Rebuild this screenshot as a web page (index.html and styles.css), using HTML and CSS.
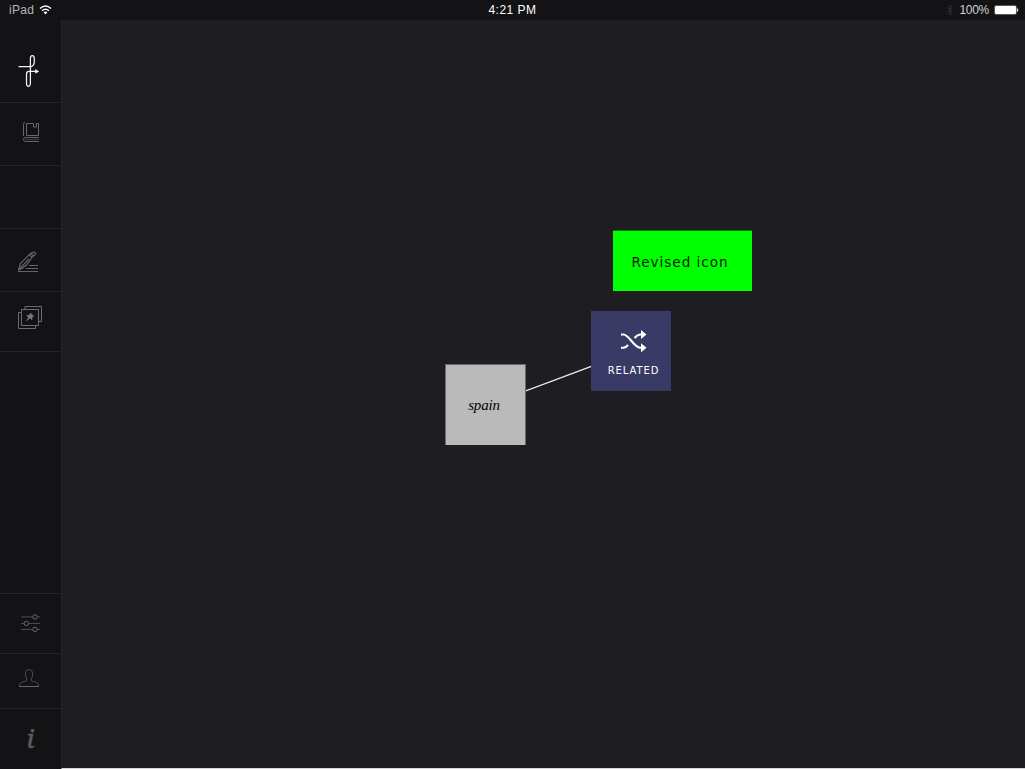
FILE: index.html
```html
<!DOCTYPE html>
<html lang="en">
<head>
<meta charset="utf-8">
<title>Canvas</title>
<link rel="stylesheet" href="styles.css">
</head>
<body>
<div class="app">
  <header class="status">
    <div class="status-left">
      <span class="device">iPad</span>
      <svg class="wifi" width="13" height="10" viewBox="0 0 13 10"><g fill="none" stroke="#fff" stroke-width="1.4"><path d="M1 3.6Q6.5-1.4 12 3.6"/><path d="M3 5.8Q6.5 2.6 10 5.8"/></g><path d="M4.6 7.3Q6.5 5.7 8.4 7.3L6.5 9.4Z" fill="#fff"/></svg>
    </div>
    <div class="clock">4:21 PM</div>
    <div class="status-right">
      <svg width="8" height="12" viewBox="0 0 8 12" fill="none" stroke="#303034"><path d="M1 3.2L6.5 8.5L4 11V1L6.5 3.5L1 8.8"/></svg>
      <span class="percent">100%</span>
      <svg class="battery" width="25" height="10" viewBox="0 0 25 10"><rect x=".5" y=".5" width="22" height="9" rx="1.5" fill="none" stroke="#55555a"/><rect x="1" y="1" width="21" height="8" rx="1" fill="#fff"/><path d="M23.3 3.5Q24.8 5 23.3 6.5Z" fill="#fff" stroke="#fff" stroke-width=".6"/></svg>
    </div>
  </header>
  <div class="main">
    <nav class="sidebar">
      <a class="item logo"><svg width="61" height="82" viewBox="0 20 61 82" stroke="#f4f4f6" stroke-width="1.25"><path d="M18.5 66.5H31.5Q34.3 65.5 34.3 61.5V58.5Q34.3 55.5 32.3 55.5Q30.4 55.5 30.4 58.5V82.5Q30.4 86.3 28.5 86.3Q26.5 86.3 26.5 83.5V74Q26.5 71.4 29 71.4H36"/><path d="M35.5 69.6L38.7 71.4L35.5 73.2Z" fill="#f4f4f6" stroke-width=".6"/></svg></a>
      <a class="item book"><svg width="61" height="62" viewBox="0 103 61 62" stroke="#66666e"><path d="M33.5 123.5H26.5V135.5H38.5V123.5H36.5V127H33.5V123.5M25 122.5Q23.5 122.5 23.5 124.5V136M39 137.5H25.5Q23.5 137.5 23.5 139.5Q23.5 141.5 25.5 141.5H39"/><path d="M25 139.5H39" stroke="#3c3c42"/></svg></a>
      <div class="item blank"></div>
      <a class="item pen"><svg width="61" height="62" viewBox="0 229 61 62" stroke="#64646c"><path d="M18 271.5H38M26 268.5H38M29 265.5H38"/><path d="M18.5 270L20.3 263.5L30.5 253.5L33.5 255.5L26.5 265L22 268.5ZM31 253.2L34 252L35.8 253.5L34 256.3M29.3 255L32 257M19 269.5L29 259" stroke-width="1.15"/></svg></a>
      <a class="item cards"><svg width="61" height="59" viewBox="0 292 61 59" stroke="#6c6c74"><path d="M21.5 309.5H38.5V325.5H21.5ZM25 309V306.5H41.5V321.5H39M21 312.5H18.5V328.5H35.5V326"/><path d="M30.5 313L33.8 316.2L32.2 317L32 319.8L30 318.2L26 321L28.4 317.4L26.5 315.5L29.6 315Z" fill="#777780" stroke="#777780" stroke-width=".4"/></svg></a>
      <div class="spacer"></div>
      <a class="item sliders"><svg width="61" height="59" viewBox="0 594 61 59" stroke="#515156"><path d="M21 616.9H32.5M37.5 616.9H40M21 623.4H24M28.5 623.4H40M21 629.4H32.5M37.5 629.4H40"/><g stroke="#68686d"><circle cx="35" cy="616.9" r="2.2"/><circle cx="26.3" cy="623.4" r="2.2"/><circle cx="35" cy="629.4" r="2.2"/></g></svg></a>
      <a class="item person"><svg width="61" height="54" viewBox="0 654 61 54" stroke="#4c4c50"><path d="M19.5 686V685Q20 682.7 22.5 682L25.5 681.2Q27.3 680.5 26.8 679L25.5 676V672.5Q25.8 669.5 29 669.5Q32.2 669.5 32.5 672.5V676L31.2 679Q30.7 680.5 32.5 681.2L35.5 682Q38 682.7 38.5 685V686"/><path d="M19 686.5H39" stroke="#69696d"/></svg></a>
      <a class="item info">i</a>
    </nav>
    <main class="canvas">
      <svg class="link" width="68" height="28" viewBox="0 0 68 28"><path d="M0 26.2L67 1.2" stroke="#eee" stroke-width="1.3"/></svg>
      <div class="node note"><span>Revised icon</span></div>
      <div class="node related">
        <svg width="28" height="24" viewBox="0 0 28 24"><path d="M1 4.5H3.5C9 4.5 14 17.8 20.5 17.8H23M1 17.8H3.5Q6 17.5 8 15M14.5 8Q17 4.8 20 4.5H23" fill="none" stroke="#fff" stroke-width="2.1"/><path d="M21 0L26.5 4.5L21 9ZM21 13.3L26.5 17.8L21 22.3Z" fill="#fff"/></svg>
        <span>RELATED</span>
      </div>
      <div class="node spain"><span>spain</span></div>
    </main>
  </div>
</div>
</body>
</html>
```
FILE: styles.css
```css
* { box-sizing: border-box; }
body { margin: 0; background: #1e1d21; }
.app { width: 1025px; height: 769px; display: flex; flex-direction: column; overflow: hidden; }
svg { display: block; flex: none; }

.status {
  height: 20px;
  flex: none;
  display: grid;
  grid-template-columns: 1fr auto 1fr;
  align-items: center;
  background: #131315;
  color: #fff;
  font: 12px/20px "Liberation Sans", Arial, sans-serif;
}
.status-left { display: flex; align-items: center; padding-left: 9px; gap: 5px; }
.device { color: #b4b4b6; letter-spacing: .3px; }
.wifi { margin-top: -1px; }
.clock { letter-spacing: .5px; }
.status-right { display: flex; align-items: center; justify-content: flex-end; padding-right: 6px; }
.percent { margin-left: 6px; color: #d0d0d2; letter-spacing: -.3px; }
.battery { margin-left: 5px; }

.main { flex: 1; display: flex; min-height: 0; }
.sidebar {
  width: 61px;
  flex: none;
  display: flex;
  flex-direction: column;
  background: #131315;
}
.item { flex: none; border-bottom: 1px solid #242427; }
.item svg { fill: none; }
.logo { height: 83px; }
.book, .blank, .pen { height: 63px; }
.cards { height: 60px; }
.spacer { flex: 1; border-bottom: 1px solid #242427; }
.sliders { height: 60px; }
.person { height: 55px; }
.info {
  height: 60px;
  border: 0;
  text-align: center;
  color: #5a5a63;
  -webkit-text-stroke: .5px #5a5a63;
  font: italic 26px/58px "Noto Serif", "DejaVu Serif", serif;
}

.canvas {
  flex: 1;
  position: relative;
  background: #1e1d21;
  border-left: 1px solid #252528;
  border-bottom: 1px solid #d8d8da;
}
.node { position: absolute; display: flex; align-items: center; justify-content: center; white-space: nowrap; }
.link { position: absolute; left: 463px; top: 345px; }
.note {
  left: 551px;
  top: 210px;
  width: 139px;
  height: 61px;
  background: #00ff00;
  border-top: 1px solid #087c0a;
  color: #041a04;
  font: 13.5px/20px "DejaVu Sans", sans-serif;
  letter-spacing: 1px;
  padding: 2px 5px 0 0;
}
.related {
  left: 529px;
  top: 291px;
  width: 80px;
  height: 80px;
  background: #3a3a66;
  color: #fff;
  flex-direction: column;
  justify-content: flex-start;
  padding: 19px 0 0 5px;
  font: 10px/14px "DejaVu Sans", sans-serif;
  letter-spacing: .9px;
}
.related span { margin-top: 10px; }
.spain {
  left: 383px;
  top: 344px;
  width: 81px;
  height: 81px;
  background: #bababa;
  border: solid #6b6b6d;
  border-width: 1px 1px 0 1px;
  color: #050505;
  font: italic 15px/20px "Liberation Serif", serif;
  letter-spacing: -.2px;
  padding: 0 3px 0 0;
}
```
